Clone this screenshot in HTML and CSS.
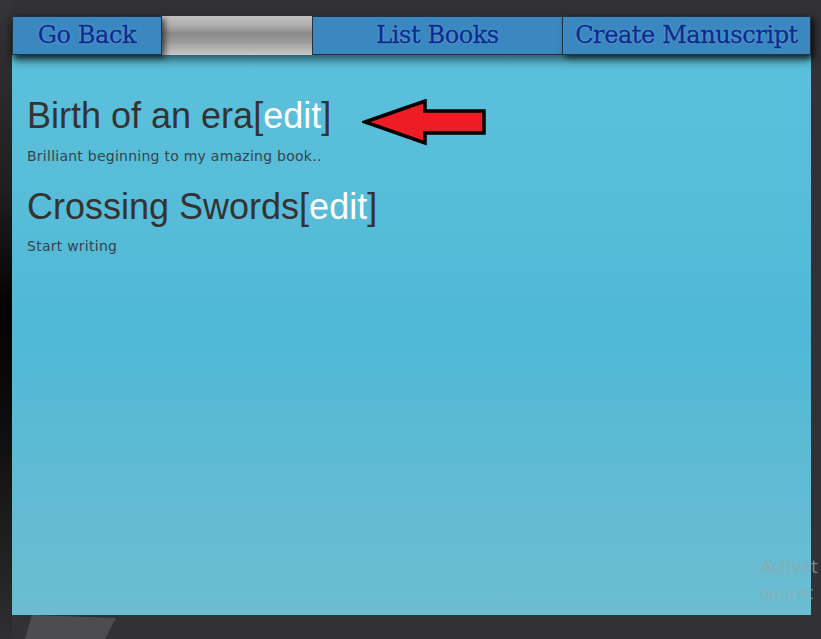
FILE: index.html
```html
<!DOCTYPE html>
<html>
<head>
<meta charset="utf-8">
<link rel="stylesheet" href="styles.css">
</head>
<body>
<div class="frame">
  <nav class="nav">
    <a class="nav-btn btn-back">Go Back</a>
    <div class="nav-gap"></div>
    <a class="nav-btn btn-list">List Books</a>
    <a class="nav-btn btn-create">Create Manuscript</a>
  </nav>
  <main class="panel">
    <section class="chapter">
      <h2 class="chapter-title">Birth of an era<span class="bracket">[</span><span class="edit">edit</span><span class="bracket">]</span></h2>
      <p class="chapter-text">Brilliant beginning to my amazing book..</p>
    </section>
    <section class="chapter">
      <h2 class="chapter-title">Crossing Swords<span class="bracket">[</span><span class="edit">edit</span><span class="bracket">]</span></h2>
      <p class="chapter-text">Start writing</p>
    </section>
  </main>
</div>
<svg class="arrow" width="126" height="47" viewBox="0 0 126 47">
  <path d="M3 23 L63 2 L63 12 L122 12 L122 34 L63 34 L63 44 Z" fill="#ee1c24" stroke="#000" stroke-width="3.5" stroke-linejoin="miter"/>
</svg>
<div class="watermark">
  <div class="wm-1">Activat</div>
  <div class="wm-2">Go to PC</div>
</div>
<div class="floor-shape"></div>
</body>
</html>
```
FILE: styles.css
```css
html, body {
  margin: 0;
  padding: 0;
  height: 100%;
  overflow: hidden;
}
body {
  background:
    linear-gradient(to bottom, #353539 0%, #1e1e20 30%, #030303 48%, #0c0c0d 65%, #222224 88%, #2f2f33 100%) no-repeat 0 0 / 12px 100%,
    #323236;
  position: relative;
}
.frame {
  padding: 16px 10px 0 12px;
  display: flex;
  flex-direction: column;
  height: 615px;
  box-sizing: border-box;
}
.nav {
  display: flex;
  height: 39px;
  position: relative;
  z-index: 2;
  box-shadow: 0 5px 9px rgba(0, 0, 0, 0.55);
}
.nav-btn {
  box-sizing: border-box;
  height: 39px;
  background: #3b88c1;
  border: 1px solid #25313c;
  display: flex;
  align-items: center;
  justify-content: center;
  font-family: "DejaVu Serif", serif;
  font-size: 24px;
  color: #0c2b8c;
  -webkit-text-stroke: 0.35px #0c2b8c;
  text-shadow: 0 0 2px rgba(140, 200, 240, 0.9);
  letter-spacing: -0.4px;
  padding-bottom: 1px;
}
.btn-back { width: 150px; box-shadow: 3px 3px 6px rgba(0,0,0,0.6); position: relative; z-index: 1; }
.nav-gap {
  width: 150px;
  height: 39px;
  background: linear-gradient(to bottom, #c2c0c1 0%, #aeadae 25%, #8a8a8a 45%, #9a9a9a 65%, #c8c8c8 100%);
}
.btn-list { width: 250px; border-right: none; }
.btn-create { width: 249px; box-shadow: 3px 3px 6px rgba(0,0,0,0.6); }
.panel {
  flex: 1;
  background: linear-gradient(to bottom, #5bc0db 0%, #56bcd8 30%, #4fb8d6 50%, #60bbd3 75%, #6bbdd1 100%);
  padding: 20px 15px 0 15px;
}
.chapter-title {
  margin: 21px 0 10px 0;
  font-family: "Liberation Sans", Arial, sans-serif;
  font-weight: normal;
  font-size: 36px;
  line-height: 39.6px;
  color: #333333;
}
.bracket { color: #333333; }
.edit { color: #ffffff; }
.chapter-text {
  margin: 0;
  font-family: "DejaVu Sans", Tahoma, sans-serif;
  font-size: 14px;
  line-height: 20px;
  letter-spacing: 0.25px;
  color: #34444c;
}
.arrow {
  position: absolute;
  left: 362px;
  top: 99px;
}
.watermark {
  position: absolute;
  left: 760px;
  top: 553px;
  width: 61px;
  white-space: nowrap;
  color: rgba(150, 165, 172, 0.75);
  font-family: "Open Sans", "DejaVu Sans", sans-serif;
}
.wm-1 { font-size: 19px; line-height: 26px; letter-spacing: -0.3px; }
.wm-2 { font-size: 14px; line-height: 20px; margin-top: 5px; letter-spacing: -0.4px; }
.floor-shape {
  position: absolute;
  left: 25px;
  top: 615px;
  width: 91px;
  height: 24px;
  background: #4d4d51;
  clip-path: polygon(7px 0, 91px 3px, 80px 24px, 0 24px);
}
```
